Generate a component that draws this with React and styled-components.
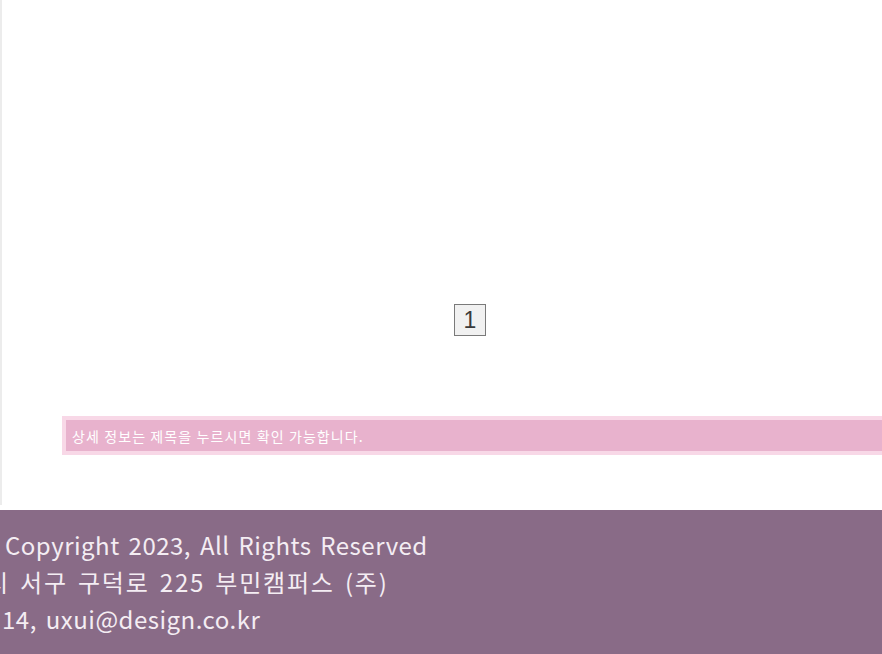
import React from 'react';
import styled, { createGlobalStyle } from 'styled-components';

const GlobalStyle = createGlobalStyle`
	html, body {
		margin: 0;
		padding: 0;
		background: #ffffff;
		overflow: hidden;
	}
	body {
		font-family: 'Noto Sans CJK KR', 'Noto Sans', sans-serif;
	}
`;

const App = () => {
	return (
		<Page>
			<GlobalStyle />
			<Main>
				<Pager>
					<PageButton>1</PageButton>
				</Pager>
				<Notice>
					<p>상세 정보는 제목을 누르시면 확인 가능합니다.</p>
				</Notice>
			</Main>

			<Footer>
				<FooterLine offset={5}>Copyright 2023, All Rights Reserved</FooterLine>
				<FooterLine offset={-14} tracking={1.8}>
					시 서구 구덕로 225 부민캠퍼스 (주)
				</FooterLine>
				<FooterLine offset={2}>14, uxui@design.co.kr</FooterLine>
			</Footer>
		</Page>
	);
};

const Page = styled.div`
	width: 882px;
	height: 654px;
	overflow: hidden;
	display: flex;
	flex-direction: column;
`;

const Main = styled.main`
	flex: none;
	height: 505px;
	border-left: 2px solid #ececec;
	display: flex;
	flex-direction: column;
	padding-left: 60px;
`;

const Pager = styled.div`
	width: 816px;
	margin-top: 304px;
	display: flex;
	justify-content: center;
`;

const PageButton = styled.span`
	box-sizing: border-box;
	width: 32px;
	height: 32px;
	display: flex;
	align-items: center;
	justify-content: center;
	border: 1px solid #7a7a7a;
	background: #f1f1f1;
	color: #3a3a3a;
	font-family: 'Liberation Sans', Arial, sans-serif;
	font-size: 23px;
`;

const Notice = styled.div`
	box-sizing: border-box;
	width: 840px;
	margin-top: 80px;
	height: 39px;
	border: 4px solid #f8d8e7;
	border-right: none;
	background: #e8b2cd;
	display: flex;
	align-items: center;
	padding-left: 6px;

	p {
		margin: 0;
		color: #ffffff;
		font-size: 14px;
		letter-spacing: 1.1px;
	}
`;

const Footer = styled.footer`
	flex: none;
	margin-top: 5px;
	height: 144px;
	background: #896b87;
	padding-top: 16px;
	box-sizing: border-box;
	overflow: hidden;
`;

const FooterLine = styled.p`
	margin: 0 0 0 ${(props) => props.offset}px;
	white-space: nowrap;
	color: #f4edf3;
	font-size: 24px;
	line-height: 37px;
	letter-spacing: ${(props) => props.tracking || 0.5}px;
	word-spacing: 3px;
`;

export default App;
